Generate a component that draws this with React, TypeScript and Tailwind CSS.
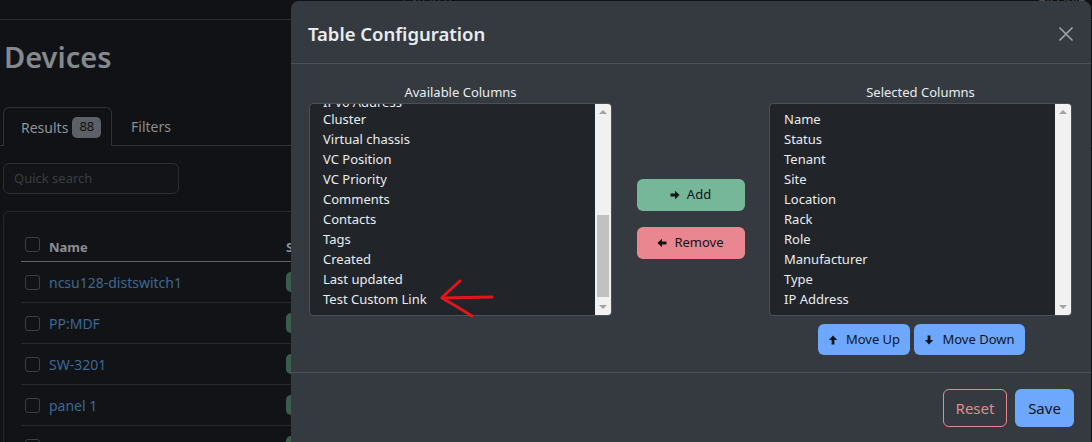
import React from "react";

const available = [
  "IPv6 Address",
  "Cluster",
  "Virtual chassis",
  "VC Position",
  "VC Priority",
  "Comments",
  "Contacts",
  "Tags",
  "Created",
  "Last updated",
  "Test Custom Link",
];

const selected = [
  "Name",
  "Status",
  "Tenant",
  "Site",
  "Location",
  "Rack",
  "Role",
  "Manufacturer",
  "Type",
  "IP Address",
];

const devices = ["ncsu128-distswitch1", "PP:MDF", "SW-3201", "panel 1", "SW-1234"];

function ArrowIcon({ dir }: { dir: "right" | "left" | "up" | "down" }) {
  const rot = { right: 0, left: 180, up: -90, down: 90 }[dir];
  return (
    <svg width="10" height="10" viewBox="0 0 10 10" style={{ transform: `rotate(${rot}deg)` }}>
      <path d="M0.5 3.6 H5 V0.8 L9.6 5 L5 9.2 V6.4 H0.5 Z" fill="#111418" />
    </svg>
  );
}

function Scrollbar({ thumb }: { thumb: boolean }) {
  return (
    <div className="w-[16px] bg-[#f1f1f1] flex flex-col shrink-0">
      <div className="h-[16px] flex items-center justify-center">
        <div className="w-0 h-0 border-l-[4px] border-r-[4px] border-b-[4px] border-l-transparent border-r-transparent border-b-[#a3a3a3]" />
      </div>
      <div className="flex-1">
        {thumb && <div className="mt-[95px] mx-[2px] h-[82px] bg-[#c1c1c1]" />}
      </div>
      <div className="h-[16px] flex items-center justify-center">
        <div className="w-0 h-0 border-l-[4px] border-r-[4px] border-t-[4px] border-l-transparent border-r-transparent border-t-[#a3a3a3]" />
      </div>
    </div>
  );
}

function ListBox({ items, offset, pad, thumb, partialFirst }: { items: string[]; offset: string; pad: string; thumb: boolean; partialFirst?: boolean }) {
  return (
    <div className="h-[213px] border border-[#4b5056] rounded-[4px] bg-[#212529] overflow-hidden flex">
      <div className="flex-1 overflow-hidden">
        <div className={`${offset} ${pad}`}>
          {items.map((t, i) => (
            <div
              key={t}
              className={
                partialFirst && i === 0
                  ? "h-[20px] leading-[26px] text-[13px] text-[#e9ecef] whitespace-nowrap"
                  : "h-[20px] leading-[20px] text-[13px] text-[#e9ecef] whitespace-nowrap"
              }
            >
              {t}
            </div>
          ))}
        </div>
      </div>
      <Scrollbar thumb={thumb} />
    </div>
  );
}

function Checkbox() {
  return <div className="w-[15px] h-[15px] rounded-[3px] border border-[#3a3d42] shrink-0" />;
}

export default function App() {
  return (
    <div className="relative w-[1092px] h-[442px] overflow-hidden bg-[#111215] font-['Noto_Sans',sans-serif]">
      {/* background page */}
      <div className="h-[20px] border-b border-[#2b2e32]" />
      <div className="pl-[4px] pt-[19px] h-[87px]">
        <h1 className="text-[29px] leading-[36px] font-semibold text-[#85898e]">Devices</h1>
      </div>
      <div className="h-[39px] flex border-b border-[#2f3236]">
        <div className="ml-[3px] w-[109px] h-[39px] border border-b-0 border-[#2f3236] rounded-t-[6px] flex items-center pl-[17px] gap-[4px] bg-[#111215] mb-[-1px]">
          <span className="text-[14px] text-[#8f9398]">Results</span>
          <span className="w-[29px] h-[21px] rounded-[5px] bg-[#5c6167] text-[#0f1012] text-[13px] flex items-center justify-center">88</span>
        </div>
        <div className="pl-[19px] flex items-center text-[14px] text-[#8a8e93]">Filters</div>
      </div>
      <div className="mt-[17px] ml-[3px] w-[176px] h-[31px] rounded-[6px] border border-[#2b2e32] bg-[#131417] flex items-center pl-[10px] text-[13px] text-[#3a3e43]">
        Quick search
      </div>
      <div className="mt-[17px] ml-[3px] w-[400px] h-[300px] rounded-[6px] border border-[#25282c] bg-[#121316]">
        <div className="ml-[17px] h-[50px] pt-[25px] border-b border-[#5d6166] flex items-start">
          <div className="ml-[4px]"><Checkbox /></div>
          <span className="ml-[9px] text-[13px] leading-[20px] font-bold text-[#8a8e93] w-[237px]">Name</span>
          <span className="text-[13px] leading-[20px] font-bold text-[#8a8e93]">S</span>
        </div>
        {devices.map((d) => (
          <div key={d} className="ml-[17px] h-[41px] border-b border-[#25282c] flex items-center">
            <div className="ml-[4px]"><Checkbox /></div>
            <span className="ml-[9px] text-[14px] text-[#3d6894] w-[237px]">{d}</span>
            <span className="w-[30px] h-[20px] rounded-[5px] bg-[#3b5e4c]" />
          </div>
        ))}
      </div>

      {/* faint text behind modal top */}
      <div className="absolute left-[400px] top-[-9px] text-[13px] text-[#3a3d42]">| Search</div>
      <div className="absolute left-[1038px] top-[-10px] text-[13px] text-[#4a4d52]">All Obje</div>

      {/* modal */}
      <div className="absolute left-[291px] top-[1px] w-[800px] h-[470px] rounded-t-[8px] bg-[#343a40] flex flex-col">
        <div className="h-[63px] shrink-0 px-[17px] pt-[3px] border-b border-[#4b5157] flex items-center justify-between">
          <h5 className="text-[18.5px] font-semibold text-[#e9ecef]">Table Configuration</h5>
          <svg width="16" height="16" viewBox="0 0 16 16">
            <path d="M1.5 1.5 L14.5 14.5 M14.5 1.5 L1.5 14.5" stroke="#a0a4a8" strokeWidth="1.6" />
          </svg>
        </div>
        <div className="h-[308px] shrink-0 pt-[18px] px-[18px] grid grid-cols-[303px_157px_303px] content-start">
          <div className="flex flex-col">
            <div className="h-[21px] leading-[21px] text-center text-[13px] text-[#e9ecef]">Available Columns</div>
            <ListBox items={available} offset="mt-[-15px]" pad="pl-[13px]" thumb partialFirst />
          </div>
          <div className="flex flex-col items-center pt-[97px] gap-[16px]">
            <button className="w-[108px] h-[32px] rounded-[6px] bg-[#75b798] text-[13px] text-[#111418] flex items-center justify-center gap-[7px]">
              <ArrowIcon dir="right" />
              <span>Add</span>
            </button>
            <button className="w-[108px] h-[32px] rounded-[6px] bg-[#ea868f] text-[13px] text-[#111418] flex items-center justify-center gap-[7px]">
              <ArrowIcon dir="left" />
              <span>Remove</span>
            </button>
          </div>
          <div className="flex flex-col">
            <div className="h-[21px] leading-[21px] text-center text-[13px] text-[#e9ecef]">Selected Columns</div>
            <ListBox items={selected} offset="mt-[5px]" pad="pl-[14px]" thumb={false} />
            <div className="mt-[8px] flex justify-center gap-[4px] pl-[2px]">
              <button className="w-[92px] h-[31px] rounded-[6px] bg-[#6ea8fe] text-[13px] text-[#111418] flex items-center justify-center gap-[8px]">
                <ArrowIcon dir="up" />
                <span>Move Up</span>
              </button>
              <button className="w-[111px] h-[31px] rounded-[6px] bg-[#6ea8fe] text-[13px] text-[#111418] flex items-center justify-center gap-[8px]">
                <ArrowIcon dir="down" />
                <span>Move Down</span>
              </button>
            </div>
          </div>
        </div>
        <div className="border-t border-[#4b5157] pt-[16px] pr-[17px] flex justify-end gap-[8px]">
          <button className="w-[64px] h-[38px] rounded-[6px] border border-[#ea868f] text-[#ea868f] text-[15px] flex items-center justify-center">
            Reset
          </button>
          <button className="w-[59px] h-[38px] rounded-[6px] bg-[#6ea8fe] text-[#111418] text-[15px] flex items-center justify-center">
            Save
          </button>
        </div>
      </div>

      {/* red annotation arrow */}
      <svg className="absolute left-[430px] top-[270px]" width="70" height="50" viewBox="0 0 70 50">
        <path
          d="M62 27 L12 28 M12 27.5 Q21 19 30 11 M12 28 Q28 37 42 46"
          stroke="#e3151b"
          strokeWidth="3"
          fill="none"
          strokeLinecap="round"
        />
      </svg>
    </div>
  );
}
